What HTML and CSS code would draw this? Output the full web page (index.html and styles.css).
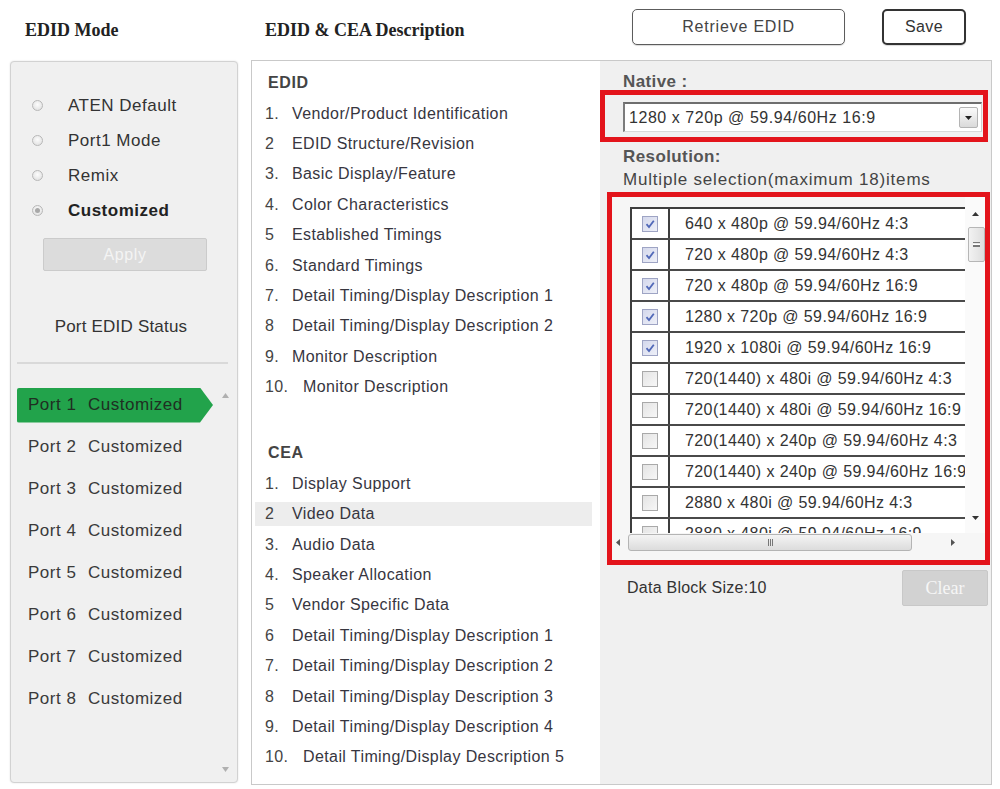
FILE: index.html
```html
<!DOCTYPE html>
<html>
<head>
<meta charset="utf-8">
<title>EDID</title>
<link rel="stylesheet" href="styles.css">
</head>
<body>
<div class="page">
  <div class="hdr">
    <h1 class="hdr-title">EDID Mode</h1>
  </div>
  <div class="hdr hdr-main">
    <h1 class="hdr-title">EDID &amp; CEA Description</h1>
    <div class="hdr-buttons">
      <button class="btn btn-retrieve">Retrieve EDID</button>
      <button class="btn btn-save">Save</button>
    </div>
  </div>

  <aside class="mode-panel">
    <ul class="modes">
      <li class="mode"><span class="radio"></span><span>ATEN Default</span></li>
      <li class="mode"><span class="radio"></span><span>Port1 Mode</span></li>
      <li class="mode"><span class="radio"></span><span>Remix</span></li>
      <li class="mode mode-on"><span class="radio radio-on"></span><span>Customized</span></li>
    </ul>
    <button class="btn-apply">Apply</button>
    <div class="status-title">Port EDID Status</div>
    <div class="sep"></div>
    <div class="ports-box">
      <ul class="ports">
        <li class="port port-active"><span class="pname">Port 1</span><span>Customized</span></li>
        <li class="port"><span class="pname">Port 2</span><span>Customized</span></li>
        <li class="port"><span class="pname">Port 3</span><span>Customized</span></li>
        <li class="port"><span class="pname">Port 4</span><span>Customized</span></li>
        <li class="port"><span class="pname">Port 5</span><span>Customized</span></li>
        <li class="port"><span class="pname">Port 6</span><span>Customized</span></li>
        <li class="port"><span class="pname">Port 7</span><span>Customized</span></li>
        <li class="port"><span class="pname">Port 8</span><span>Customized</span></li>
      </ul>
      <div class="pscroll">
        <svg width="7" height="5" viewBox="0 0 7 5"><path d="M0 5L3.5 0L7 5Z" fill="#b0b0b0"/></svg>
        <svg width="7" height="5" viewBox="0 0 7 5"><path d="M0 0L3.5 5L7 0Z" fill="#b0b0b0"/></svg>
      </div>
    </div>
  </aside>

  <main class="desc-panel">
    <section class="desc-list">
      <h2 class="sec-title">EDID</h2>
      <ol class="items">
        <li class="item"><span class="num">1.</span>Vendor/Product Identification</li>
        <li class="item"><span class="num">2</span>EDID Structure/Revision</li>
        <li class="item"><span class="num">3.</span>Basic Display/Feature</li>
        <li class="item"><span class="num">4.</span>Color Characteristics</li>
        <li class="item"><span class="num">5</span>Established Timings</li>
        <li class="item"><span class="num">6.</span>Standard Timings</li>
        <li class="item"><span class="num">7.</span>Detail Timing/Display Description 1</li>
        <li class="item"><span class="num">8</span>Detail Timing/Display Description 2</li>
        <li class="item"><span class="num">9.</span>Monitor Description</li>
        <li class="item"><span class="num num-wide">10.</span>Monitor Description</li>
      </ol>
      <h2 class="sec-title sec-cea">CEA</h2>
      <ol class="items">
        <li class="item"><span class="num">1.</span>Display Support</li>
        <li class="item item-sel"><span class="num">2</span>Video Data</li>
        <li class="item"><span class="num">3.</span>Audio Data</li>
        <li class="item"><span class="num">4.</span>Speaker Allocation</li>
        <li class="item"><span class="num">5</span>Vendor Specific Data</li>
        <li class="item"><span class="num">6</span>Detail Timing/Display Description 1</li>
        <li class="item"><span class="num">7.</span>Detail Timing/Display Description 2</li>
        <li class="item"><span class="num">8</span>Detail Timing/Display Description 3</li>
        <li class="item"><span class="num">9.</span>Detail Timing/Display Description 4</li>
        <li class="item"><span class="num num-wide">10.</span>Detail Timing/Display Description 5</li>
      </ol>
    </section>

    <section class="res-panel">
      <div class="lbl lbl-native">Native :</div>
      <div class="redbox redbox-native">
        <div class="select">
          <span class="select-val">1280 x 720p @ 59.94/60Hz 16:9</span>
          <span class="select-btn"><svg width="7" height="4" viewBox="0 0 7 4"><path d="M0 0L3.5 4L7 0Z" fill="#222"/></svg></span>
        </div>
      </div>
      <div class="lbl lbl-res">Resolution:</div>
      <div class="hint">Multiple selection(maximum 18)items</div>
      <div class="redbox redbox-list">
        <div class="listbox">
          <div class="viewport">
            <div class="rows">
              <div class="row"><span class="cbcell"><span class="cb cb-on"><svg width="12" height="12" viewBox="0 0 12 12"><path d="M2.5 6.2L5 9L9.8 2.8" fill="none" stroke="#5068b8" stroke-width="1.8"/></svg></span></span><span class="txt">640 x 480p @ 59.94/60Hz 4:3</span></div>
              <div class="row"><span class="cbcell"><span class="cb cb-on"><svg width="12" height="12" viewBox="0 0 12 12"><path d="M2.5 6.2L5 9L9.8 2.8" fill="none" stroke="#5068b8" stroke-width="1.8"/></svg></span></span><span class="txt">720 x 480p @ 59.94/60Hz 4:3</span></div>
              <div class="row"><span class="cbcell"><span class="cb cb-on"><svg width="12" height="12" viewBox="0 0 12 12"><path d="M2.5 6.2L5 9L9.8 2.8" fill="none" stroke="#5068b8" stroke-width="1.8"/></svg></span></span><span class="txt">720 x 480p @ 59.94/60Hz 16:9</span></div>
              <div class="row"><span class="cbcell"><span class="cb cb-on"><svg width="12" height="12" viewBox="0 0 12 12"><path d="M2.5 6.2L5 9L9.8 2.8" fill="none" stroke="#5068b8" stroke-width="1.8"/></svg></span></span><span class="txt">1280 x 720p @ 59.94/60Hz 16:9</span></div>
              <div class="row"><span class="cbcell"><span class="cb cb-on"><svg width="12" height="12" viewBox="0 0 12 12"><path d="M2.5 6.2L5 9L9.8 2.8" fill="none" stroke="#5068b8" stroke-width="1.8"/></svg></span></span><span class="txt">1920 x 1080i @ 59.94/60Hz 16:9</span></div>
              <div class="row"><span class="cbcell"><span class="cb"></span></span><span class="txt">720(1440) x 480i @ 59.94/60Hz 4:3</span></div>
              <div class="row"><span class="cbcell"><span class="cb"></span></span><span class="txt">720(1440) x 480i @ 59.94/60Hz 16:9</span></div>
              <div class="row"><span class="cbcell"><span class="cb"></span></span><span class="txt">720(1440) x 240p @ 59.94/60Hz 4:3</span></div>
              <div class="row"><span class="cbcell"><span class="cb"></span></span><span class="txt">720(1440) x 240p @ 59.94/60Hz 16:9</span></div>
              <div class="row"><span class="cbcell"><span class="cb"></span></span><span class="txt">2880 x 480i @ 59.94/60Hz 4:3</span></div>
              <div class="row"><span class="cbcell"><span class="cb"></span></span><span class="txt">2880 x 480i @ 59.94/60Hz 16:9</span></div>
            </div>
          </div>
          <div class="vscroll">
            <span class="sarrow"><svg width="7" height="4" viewBox="0 0 7 4"><path d="M0 4L3.5 0L7 4Z" fill="#333"/></svg></span>
            <span class="vthumb"><span class="grip-h"></span></span>
            <span class="sfill"></span>
            <span class="sarrow"><svg width="7" height="4" viewBox="0 0 7 4"><path d="M0 0L3.5 4L7 0Z" fill="#333"/></svg></span>
          </div>
          <div class="hscroll">
            <span class="harrow"><svg width="4" height="7" viewBox="0 0 4 7"><path d="M4 0L0 3.5L4 7Z" fill="#555"/></svg></span>
            <span class="hthumb"><span class="grip-v"></span></span>
            <span class="sfill"></span>
            <span class="harrow harrow-r"><svg width="4" height="7" viewBox="0 0 4 7"><path d="M0 0L4 3.5L0 7Z" fill="#555"/></svg></span>
          </div>
          <div class="corner"></div>
        </div>
      </div>
      <div class="foot">
        <span class="dbs">Data Block Size:10</span>
        <button class="btn-clear">Clear</button>
      </div>
    </section>
  </main>
</div>
</body>
</html>
```

FILE: styles.css
```css
* { box-sizing: border-box; }
html, body { margin: 0; padding: 0; background: #fff; }
body {
  font-family: "Liberation Sans", Arial, sans-serif;
  color: #333;
  width: 1000px;
  height: 789px;
  overflow: hidden;
}
ul, ol { list-style: none; margin: 0; padding: 0; }
h1, h2 { margin: 0; }

.page {
  display: grid;
  grid-template-columns: 228px 741px;
  grid-template-rows: 60px 725px;
  column-gap: 13px;
  padding-left: 10px;
}

/* header */
.hdr { display: flex; align-items: flex-start; }
.hdr-title {
  margin: 20px 0 0 15px;
  font-family: "Liberation Serif", "Times New Roman", serif;
  font-weight: bold;
  font-size: 18px;
  line-height: 20px;
  color: #222;
}
.hdr-main .hdr-title { margin-left: 14px; }
.hdr-buttons {
  margin: 9px 26px 0 auto;
  display: flex;
  gap: 37px;
}
.btn {
  height: 36px;
  padding: 0;
  background: #fff;
  border: 1px solid #5c5c5c;
  border-radius: 5px;
  font-family: "Liberation Sans", Arial, sans-serif;
  font-size: 16px;
  letter-spacing: 0.8px;
  color: #444;
  box-shadow: 0 1px 1px rgba(0,0,0,0.15);
}
.btn-retrieve { width: 213px; }
.btn-save { width: 84px; border: 2px solid #333; letter-spacing: 0.4px; color: #333; }

/* left panel */
.mode-panel {
  margin: 1px 0 2px;
  background: #f0f0f0;
  border: 1px solid #d2d2d2;
  border-radius: 4px;
  box-shadow: 0 0 2px rgba(0,0,0,0.12);
  display: flex;
  flex-direction: column;
}
.modes { padding: 26px 0 0 21px; }
.mode {
  height: 35px;
  display: flex;
  align-items: center;
  font-size: 17px;
  letter-spacing: 0.5px;
  color: #333;
}
.mode-on { font-weight: bold; color: #222; }
.radio {
  width: 11px;
  height: 11px;
  border-radius: 50%;
  border: 1px solid #b8b8b8;
  background: radial-gradient(circle at 50% 40%, #fcfcfc, #dcdcdc);
  margin-right: 25px;
  display: flex;
  align-items: center;
  justify-content: center;
  flex: none;
}
.radio-on::after {
  content: "";
  width: 5px;
  height: 5px;
  border-radius: 50%;
  background: #a8a8a8;
}
.btn-apply {
  margin: 10px 0 0 32px;
  width: 164px;
  height: 33px;
  background: #dcdcdc;
  border: 1px solid #cbcbcb;
  border-radius: 2px;
  color: #f4f4f4;
  font-family: "Liberation Sans", Arial, sans-serif;
  font-size: 16px;
  letter-spacing: 0.6px;
  padding: 0;
}
.status-title {
  margin-top: 46px;
  height: 20px;
  line-height: 20px;
  text-align: center;
  padding-right: 6px;
  font-size: 17px;
  letter-spacing: 0.2px;
  color: #333;
}
.sep {
  margin: 25px 9px 0 6px;
  height: 2px;
  background: #d9d9d9;
}
.ports-box {
  margin-top: 20px;
  flex: 1;
  display: flex;
  padding-left: 6px;
}
.ports { width: 196px; }
.port {
  height: 42px;
  display: flex;
  align-items: center;
  padding-left: 11px;
  font-size: 17px;
  letter-spacing: 0.5px;
  color: #3a3a3a;
}
.pname { width: 60px; flex: none; }
.port-active {
  height: 35px;
  margin: 3.5px 0;
  background: #22a34b;
  color: #1f2f22;
  border-radius: 2px 0 0 2px;
  clip-path: polygon(0 0, calc(100% - 13px) 0, 100% 50%, calc(100% - 13px) 100%, 0 100%);
}
.pscroll {
  flex: 1;
  display: flex;
  flex-direction: column;
  justify-content: space-between;
  align-items: center;
  padding: 9px 0 10px;
}

/* main panel */
.desc-panel {
  border: 1px solid #c9c9c9;
  display: grid;
  grid-template-columns: 348px 1fr;
  background: #fff;
}
.desc-list {
  padding: 7px 8px 0 3px;
  background: #fff;
}
.sec-title {
  height: 30.4px;
  line-height: 30.4px;
  padding-left: 13px;
  font-size: 16px;
  font-weight: bold;
  letter-spacing: 0.6px;
  color: #444;
}
.sec-cea { margin-top: 36px; }
.item {
  height: 30.4px;
  display: flex;
  align-items: center;
  padding-left: 10px;
  border-top: 3.5px solid transparent;
  border-bottom: 3.5px solid transparent;
  background-clip: padding-box;
  font-size: 16px;
  letter-spacing: 0.4px;
  color: #37363f;
  white-space: nowrap;
}
.item-sel { background-color: #ededed; }
.num { width: 27px; flex: none; color: #444; }
.num-wide { width: 38px; }

/* right panel */
.res-panel {
  background: #f0f0f0;
  padding-top: 11px;
  display: flex;
  flex-direction: column;
  align-items: flex-start;
}
.lbl {
  margin-left: 23px;
  height: 20px;
  line-height: 20px;
  font-size: 17px;
  font-weight: bold;
  letter-spacing: 0.4px;
  color: #555;
}
.redbox { border: 5px solid #e3141b; }
.redbox-native {
  margin-top: -2px;
  width: 388px;
  padding: 7px 1px 5px 18px;
}
.select {
  width: 100%;
  height: 30px;
  display: flex;
  align-items: center;
  background: #fff;
  border-top: 2px solid #6e6e6e;
  border-left: 2px solid #7c7c7c;
  border-right: 1px solid #d0d0d0;
  border-bottom: 1px solid #d8d8d8;
  padding-left: 4px;
}
.select-val {
  font-size: 16px;
  letter-spacing: 0.55px;
  color: #333;
  white-space: nowrap;
}
.select-btn {
  margin-left: auto;
  margin-right: 3px;
  width: 19px;
  height: 21px;
  border: 1px solid #b4b4b4;
  border-radius: 2px;
  background: linear-gradient(#fbfbfb, #dadada);
  display: flex;
  align-items: center;
  justify-content: center;
}
.lbl-res { margin-top: 5px; }
.hint {
  margin: 3px 0 0 23px;
  height: 20px;
  line-height: 20px;
  font-size: 17px;
  letter-spacing: 0.8px;
  color: #444;
  white-space: nowrap;
}
.redbox-list {
  margin: 2px 0 0 7px;
  width: 383px;
  padding-bottom: 8px;
  background: #f6f6f6;
}
.listbox {
  display: grid;
  grid-template-columns: 353px 20px;
  grid-template-rows: 336px 19px;
}
.viewport {
  overflow: hidden;
  padding: 10px 0 0 18px;
}
.rows {
  width: 420px;
  border-top: 2px solid #3e3e3e;
  border-left: 2px solid #3e3e3e;
}
.row {
  height: 31px;
  display: flex;
  background: #fff;
  border-bottom: 2px solid #4a4a4a;
}
.cbcell {
  width: 38px;
  flex: none;
  border-right: 2px solid #3e3e3e;
  display: flex;
  align-items: center;
  justify-content: center;
}
.cb {
  width: 16px;
  height: 16px;
  border: 1px solid #a9a9a9;
  background: linear-gradient(135deg, #e4e4e4, #f7f7f7);
  display: flex;
  align-items: center;
  justify-content: center;
}
.cb-on {
  border-color: #9ea4c4;
  background: linear-gradient(135deg, #d4d8ec, #eef0f8);
}
.txt {
  padding-left: 15px;
  line-height: 29px;
  font-size: 16px;
  letter-spacing: 0.4px;
  color: #333;
  white-space: nowrap;
}
.vscroll {
  display: flex;
  flex-direction: column;
  align-items: center;
  background: #fafafa;
}
.sarrow {
  height: 17px;
  width: 17px;
  display: flex;
  align-items: center;
  justify-content: center;
  flex: none;
}
.vscroll .sarrow:first-child { margin-top: 8px; }
.vscroll .sarrow:last-child { margin-bottom: 7px; }
.vthumb {
  margin-top: 5px;
  margin-left: 3px;
  width: 17px;
  height: 35px;
  border: 1px solid #b6b6b6;
  border-radius: 2px;
  background: linear-gradient(90deg, #f2f2f2, #dedede);
  display: flex;
  align-items: center;
  justify-content: center;
  flex: none;
}
.grip-h {
  width: 7px;
  height: 5px;
  border-top: 1px solid #777;
  border-bottom: 1px solid #777;
  background: linear-gradient(#fff 0 1px, #777 1px 2px, transparent 2px) 0 1px / 100% 3px no-repeat;
}
.sfill { flex: 1; }
.hscroll {
  display: flex;
  align-items: center;
  background: #f6f6f6;
}
.harrow {
  width: 12px;
  height: 19px;
  display: flex;
  align-items: center;
  justify-content: center;
  flex: none;
}
.harrow-r { margin-right: 6px; }
.hthumb {
  margin-left: 4px;
  width: 284px;
  height: 17px;
  border: 1px solid #b4b4b4;
  border-radius: 3px;
  background: linear-gradient(#f4f4f4, #dcdcdc);
  display: flex;
  align-items: center;
  justify-content: center;
  flex: none;
}
.grip-v {
  width: 5px;
  height: 7px;
  border-left: 1px solid #777;
  border-right: 1px solid #777;
  background: linear-gradient(90deg, transparent 1px, #777 1px 2px, transparent 2px);
}
.corner { background: #f6f6f6; }

.foot {
  margin-top: 5px;
  width: 100%;
  height: 36px;
  display: flex;
  align-items: center;
  padding: 0 3px 0 27px;
}
.dbs {
  font-size: 16px;
  letter-spacing: 0.25px;
  color: #333;
}
.btn-clear {
  margin-left: auto;
  width: 86px;
  height: 36px;
  padding: 0;
  background: #d2d2d2;
  border: 1px solid #c8c8c8;
  border-radius: 2px;
  color: #f6f6f6;
  font-family: "Liberation Serif", "Times New Roman", serif;
  font-size: 18px;
}
```
